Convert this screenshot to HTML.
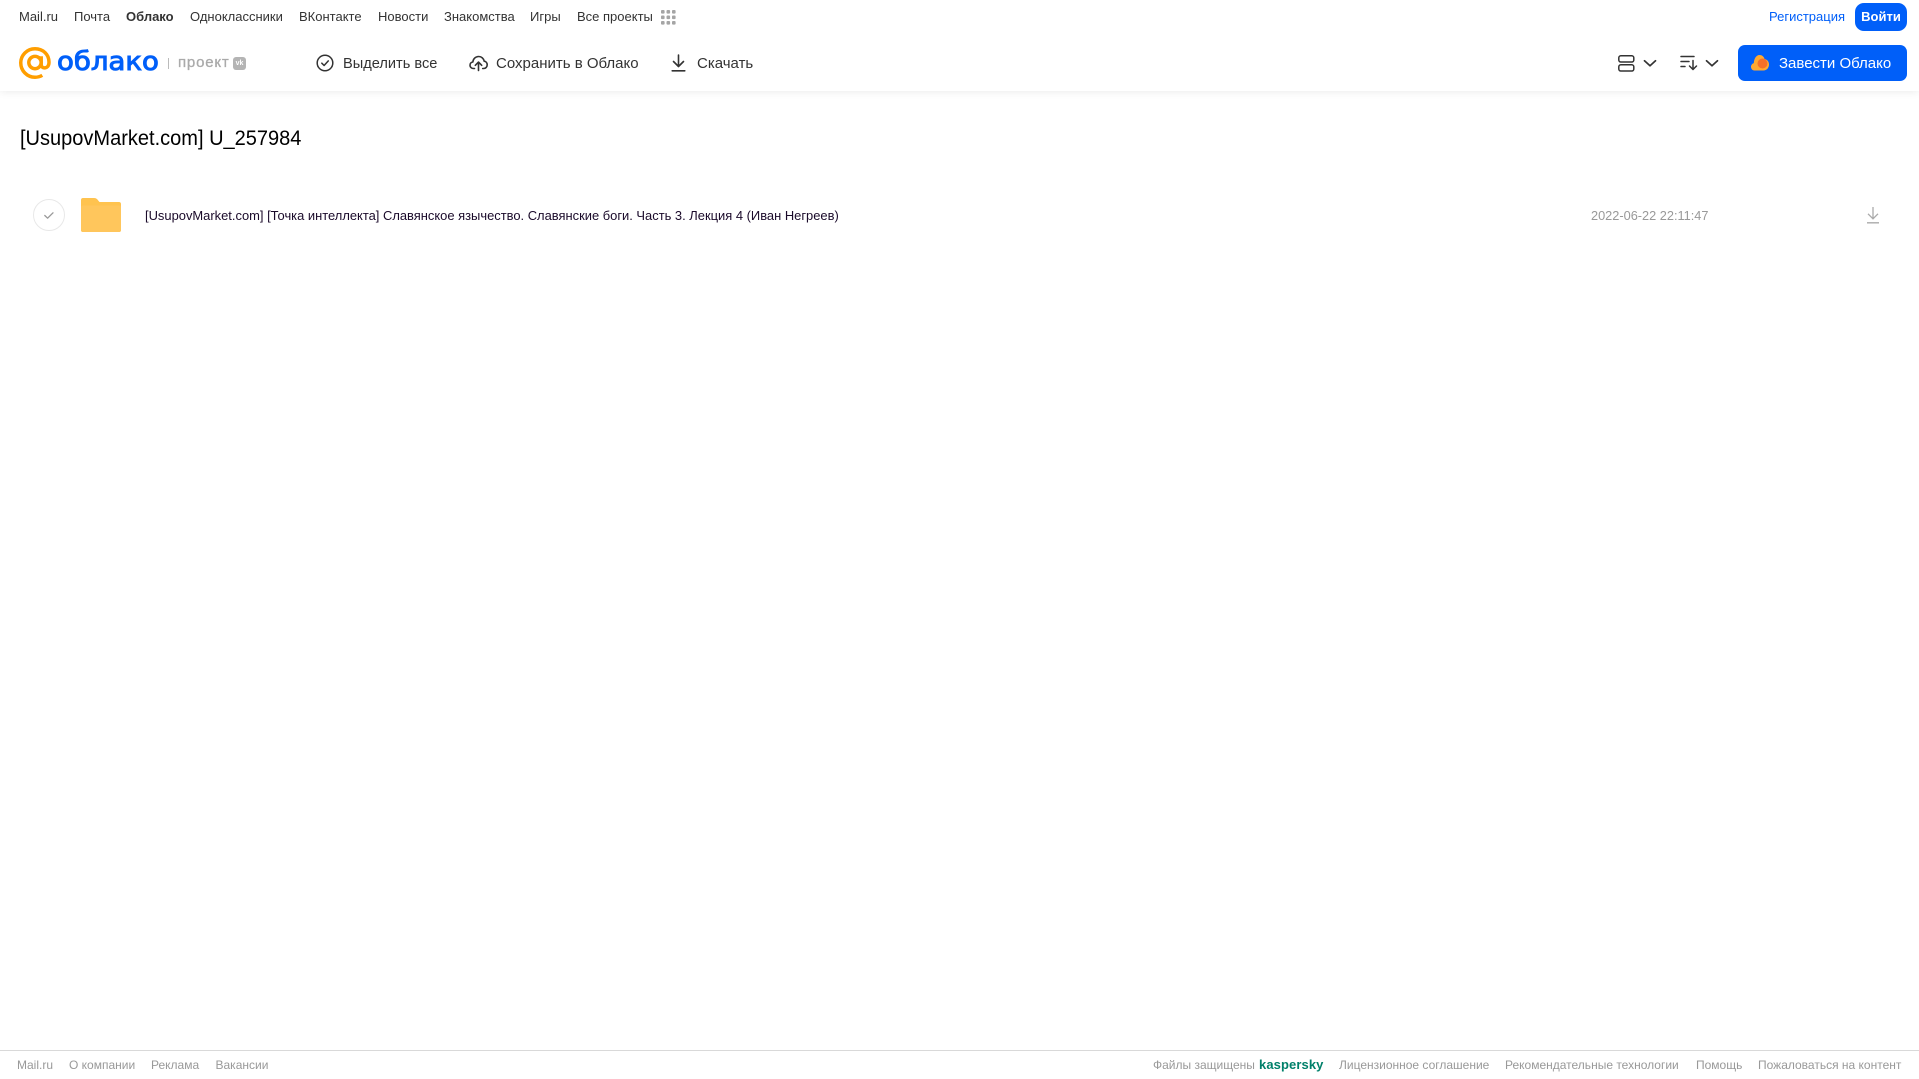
<!DOCTYPE html>
<html lang="ru"><head><meta charset="utf-8"><title>Облако</title>
<style>
html,body{margin:0;padding:0;background:#fff}
body{width:1919px;height:1079px;overflow:hidden;position:relative;font-family:"Liberation Sans",Arial,sans-serif}
.t{position:absolute;white-space:nowrap;line-height:20px;height:20px}
.n{top:7px;font-size:13px;color:#333}
.a{top:53px;font-size:15px;color:#333;padding-top:1px}
.f{top:1055px;font-size:12px;color:#999}
svg{position:absolute;display:block}
#hd{position:absolute;left:0;top:0;width:1919px;height:91px;background:#fff;box-shadow:0 1px 8px rgba(0,0,0,.08)}
</style></head><body>
<div id="hd"></div>
<span class="t n" style="left:19px">Mail.ru</span>
<span class="t n" style="left:74px">Почта</span>
<span class="t n" style="left:126px;font-weight:bold">Облако</span>
<span class="t n" style="left:190px">Одноклассники</span>
<span class="t n" style="left:299px">ВКонтакте</span>
<span class="t n" style="left:378px">Новости</span>
<span class="t n" style="left:444px">Знакомства</span>
<span class="t n" style="left:530px">Игры</span>
<span class="t n" style="left:577px">Все проекты</span>
<svg style="left:661px;top:10px" width="15" height="15" fill="#a5a5a5"><rect x="0" y="0" width="3.6" height="3.6" rx="1"/><rect x="5.5" y="0" width="3.6" height="3.6" rx="1"/><rect x="11" y="0" width="3.6" height="3.6" rx="1"/><rect x="0" y="5.5" width="3.6" height="3.6" rx="1"/><rect x="5.5" y="5.5" width="3.6" height="3.6" rx="1"/><rect x="11" y="5.5" width="3.6" height="3.6" rx="1"/><rect x="0" y="11" width="3.6" height="3.6" rx="1"/><rect x="5.5" y="11" width="3.6" height="3.6" rx="1"/><rect x="11" y="11" width="3.6" height="3.6" rx="1"/></svg>

<svg style="left:19px;top:47px" width="32" height="32" viewBox="0 0 33 33" fill="none" stroke="#ff9e00" stroke-width="3.6"><circle cx="16.5" cy="16" r="6.4"/><path d="M22.9 9.5v8.5c0 5 7.6 5 8-1.500C31.400 7.500 24.500 1.800 16.500 1.800 8.500 1.800 1.800 8.300 1.800 16.300c0 8.200 6.500 14.900 14.700 14.900 3 0 5.500-.8 7.500-2"/></svg>
<span class="t" style="left:57px;top:46px;height:32px;line-height:32px;font-size:26px;color:#005ff9;-webkit-text-stroke:1px #005ff9;font-family:'DejaVu Sans',sans-serif;transform-origin:0 50%;transform:scaleX(1.06)">облако</span>
<div style="position:absolute;left:168px;top:58px;width:1px;height:11px;background:#bbb"></div>
<span class="t" style="left:178px;top:53px;font-size:15px;color:#aaa;letter-spacing:.8px;-webkit-text-stroke:.3px #aaa">проект</span>
<div style="position:absolute;left:233px;top:57px;width:13px;height:13px;border-radius:3px;background:#b4b4b4;color:#fff;font-size:7px;line-height:13px;text-align:center;font-weight:bold">vk</div>

<svg style="left:316px;top:54px" width="18" height="18" viewBox="0 0 18 18" fill="none" stroke="#333" stroke-width="1.500"><circle cx="9" cy="9" r="7.800"/><path d="M5.800 9.200l2.300 2.300 4.200-4.600" stroke-linecap="round" stroke-linejoin="round"/></svg>
<span class="t a" style="left:343px;font-size:14.6px">Выделить все</span>
<svg style="left:469px;top:54px" width="19" height="18" viewBox="0 0 19 18" fill="none" stroke="#333" stroke-width="1.600" stroke-linecap="round" stroke-linejoin="round"><path d="M5.500 14.500H4.500C2.500 14.500 1 13 1 11.200 1 9.500 2.200 8.300 3.800 8 4.200 4.800 6.500 2.500 9.700 2.500c2.800 0 5 2 5.500 4.700 2 .3 3 1.900 3 3.600 0 2-1.500 3.700-3.500 3.700h-1"/><path d="M9.500 16.500V8.500M6.300 11.300l3.200-3.200 3.200 3.200"/></svg>
<span class="t a" style="left:496px">Сохранить в Облако</span>
<svg style="left:671px;top:54px" width="15" height="18" viewBox="0 0 15 18" fill="none" stroke="#333" stroke-width="1.600" stroke-linecap="round" stroke-linejoin="round"><path d="M7.500 1v11M2.500 7.500l5 5 5-5M1.200 16.800h12.600"/></svg>
<span class="t a" style="left:697px">Скачать</span>

<span class="t" style="left:1769px;top:7px;font-size:13px;color:#005ff9">Регистрация</span>
<div style="position:absolute;left:1855px;top:3px;width:52px;height:28px;border-radius:9px;background:#005ff9;color:#fff;font-size:13px;font-weight:bold;line-height:28px;text-align:center">Войти</div>

<svg style="left:1618px;top:55px" width="17" height="17" viewBox="0 0 17 17" fill="none" stroke="#333" stroke-width="1.500"><rect x=".8" y=".8" width="15" height="6.200" rx="2"/><rect x=".8" y="9.800" width="15" height="6.200" rx="2"/></svg>
<svg style="left:1643px;top:59px" width="14" height="9" viewBox="0 0 14 9" fill="none" stroke="#333" stroke-width="1.700" stroke-linecap="round" stroke-linejoin="round"><path d="M1.500 1.800L7 6.800l5.500-5"/></svg>
<svg style="left:1680px;top:55px" width="18" height="16" viewBox="0 0 18 16" fill="none" stroke="#333" stroke-width="1.500" stroke-linecap="round" stroke-linejoin="round"><path d="M1 1.500h13M1 6.500h8M1 11.500h4M13 5.500v9M9.500 11l3.500 3.500 3.500-3.500"/></svg>
<svg style="left:1705px;top:59px" width="14" height="9" viewBox="0 0 14 9" fill="none" stroke="#333" stroke-width="1.700" stroke-linecap="round" stroke-linejoin="round"><path d="M1.500 1.800L7 6.800l5.500-5"/></svg>
<div style="position:absolute;left:1738px;top:45px;width:169px;height:36px;border-radius:7px;background:#005ff9"></div>
<svg style="left:1750px;top:54px" width="20" height="17" viewBox="0 0 20 17"><path d="M4.500 16.500C2 16.500 1 14.500 1 12.800c0-1.800 1.200-3.300 2.800-3.700C4 5 6 1 9.500 1c2.500 0 4.500 1.700 5 4 2.500 .3 4.500 2.500 4.500 5.500 0 3.500-2.500 6-5.500 6z" fill="#ffa930"/><circle cx="12.500" cy="9.500" r="5" fill="#f4702a"/></svg>
<span class="t a" style="left:1779px;color:#fff">Завести Облако</span>

<span class="t" style="left:20px;top:126px;height:26px;line-height:26px;font-size:21px;color:#000;transform-origin:0 50%;transform:scaleX(.953)">[UsupovMarket.com] U_257984</span>

<svg style="left:33px;top:199px" width="32" height="32" viewBox="0 0 32 32" fill="none"><circle cx="16" cy="16" r="15.500" stroke="#e8e8e8"/><path d="M11.800 16.500l2.800 2.700 5.400-5.400" stroke="#999" stroke-width="1.300" stroke-linecap="round" stroke-linejoin="round"/></svg>
<svg style="left:81px;top:198px" width="40" height="34" viewBox="0 0 40 34"><path d="M2 0h11c2 0 3 .8 4 2.200L18.500 4H38c1.200 0 2 .8 2 2v26c0 1.200-.8 2-2 2H2c-1.200 0-2-.8-2-2V2C0 .8.800 0 2 0z" fill="#ffc34f"/><rect x="0" y="7.500" width="40" height="26.500" rx="2" fill="#ffc65c"/></svg>
<span class="t" style="left:145px;top:206px;font-size:12.93px;color:#1a0a2a">[UsupovMarket.com] [Точка интеллекта] Славянское язычество. Славянские боги. Часть 3. Лекция 4 (Иван Негреев)</span>
<span class="t" style="left:1591px;top:206px;font-size:12.75px;color:#999">2022-06-22 22:11:47</span>
<svg style="left:1866px;top:206px" width="14" height="18" viewBox="0 0 14 18" fill="none" stroke="#aaa" stroke-width="1.300"><path d="M7 1v11.500M2 7.800l5 5 5-5M1 16.800h12"/></svg>

<div style="position:absolute;left:0;top:1050px;width:1919px;height:1px;background:#d9d9d9"></div>
<span class="t f" style="left:17px">Mail.ru</span>
<span class="t f" style="left:69px">О компании</span>
<span class="t f" style="left:151px">Реклама</span>
<span class="t f" style="left:215.500px">Вакансии</span>
<span class="t f" style="left:1153px">Файлы защищены</span>
<span class="t f" style="left:1259px;font-size:13px;font-weight:bold;color:#00806a;letter-spacing:.1px">kaspersky</span>
<span class="t f" style="left:1339px">Лицензионное соглашение</span>
<span class="t f" style="left:1505px">Рекомендательные технологии</span>
<span class="t f" style="left:1696px">Помощь</span>
<span class="t f" style="left:1758px">Пожаловаться на контент</span>
</body></html>
